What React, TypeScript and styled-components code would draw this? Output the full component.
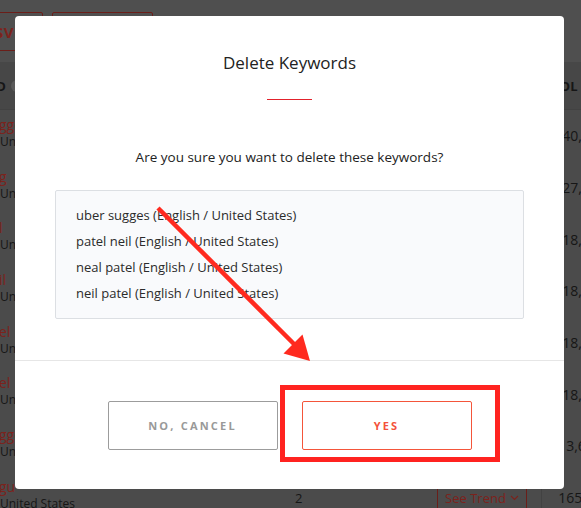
import styled, { createGlobalStyle } from 'styled-components'

const GlobalStyle = createGlobalStyle`
  html, body {
    margin: 0;
    padding: 0;
    background: #4b4b4b;
    font-family: 'Open Sans', 'Liberation Sans', sans-serif;
    overflow: hidden;
  }
`

const rows = [
  { kw: 'gge', vol: '40,500' },
  { kw: 'g', vol: '27,100' },
  { kw: 'l', vol: '18,100' },
  { kw: 'il', vol: '18,100' },
  { kw: 'el', vol: '18,100' },
  { kw: 'el', vol: '18,100' },
  { kw: 'gge', vol: '3,600' },
  { kw: 'gu', vol: '165,000' },
]

const keywords = [
  'uber sugges (English / United States)',
  'patel neil (English / United States)',
  'neal patel (English / United States)',
  'neil patel (English / United States)',
]

export default function App() {
  return (
    <>
      <GlobalStyle />
      <Page>
        <TopBar>
          <ActionButton $width={120} $first>EXPORT TO CSV</ActionButton>
          <ActionButton $width={101}>ADD</ActionButton>
        </TopBar>
        <TableHead>
          <HeadLabel>KEYWORD</HeadLabel>
          <InfoDot />
          <HeadVol>VOL</HeadVol>
        </TableHead>
        {rows.map((r, i) => (
          <Row key={i}>
            <KeywordCell>
              <KeywordName>{r.kw}</KeywordName>
              <Location>United States</Location>
            </KeywordCell>
            <CountCell>2</CountCell>
            <TrendCell>
              <TrendButton>
                See Trend
                <svg width="9" height="6" viewBox="0 0 9 6">
                  <path d="M1 1l3.5 3.5L8 1" fill="none" stroke="currentColor" strokeWidth="1.1" />
                </svg>
              </TrendButton>
            </TrendCell>
            <VolCell>{r.vol}</VolCell>
          </Row>
        ))}

        <Overlay>
          <Modal>
            <Body>
              <Title>Delete Keywords</Title>
              <Divider />
              <Question>Are you sure you want to delete these keywords?</Question>
              <KeywordList>
                {keywords.map((k) => (
                  <KeywordItem key={k}>{k}</KeywordItem>
                ))}
              </KeywordList>
            </Body>
            <Footer>
              <DialogButton $tone="muted">NO, CANCEL</DialogButton>
              <DialogButton $tone="danger">YES</DialogButton>
            </Footer>
          </Modal>
        </Overlay>

        <Highlight />
        <Arrow width="581" height="508" viewBox="0 0 581 508">
          <line x1="158" y1="208" x2="295" y2="345" stroke="#ff2a1f" strokeWidth="4.5" />
          <polygon points="310,361 283.5,353.5 302.5,334.5" fill="#ff2a1f" />
        </Arrow>
      </Page>
    </>
  )
}

const Page = styled.div`
  position: relative;
  width: 581px;
  height: 508px;
  overflow: hidden;
  background: #4b4b4b;
`

const TopBar = styled.div`
  display: flex;
  gap: 9px;
  height: 62px;
  padding-top: 12px;
  box-sizing: border-box;
  margin-left: -77px;
  background: #4f4f4f;
`

const ActionButton = styled.div<{ $width: number; $first?: boolean }>`
  flex-shrink: 0;
  width: ${(p) => p.$width}px;
  height: 39px;
  box-sizing: border-box;
  border: 1px solid #6b1e19;
  border-radius: 2px;
  display: flex;
  align-items: center;
  justify-content: ${(p) => (p.$first ? 'flex-end' : 'center')};
  padding-right: ${(p) => (p.$first ? '28px' : '0')};
  color: #7d221c;
  font-weight: 700;
  font-size: 15px;
  letter-spacing: 0.5px;
  white-space: nowrap;
`

const TableHead = styled.div`
  height: 48px;
  display: flex;
  align-items: center;
  background: #474747;
  border-bottom: 1px solid #424242;
  box-sizing: border-box;
`

const HeadLabel = styled.span`
  flex-shrink: 0;
  width: 70px;
  margin-left: -64px;
  text-align: right;
  font-weight: 700;
  font-size: 13px;
  color: #161616;
`

const InfoDot = styled.span`
  flex-shrink: 0;
  width: 12px;
  height: 12px;
  margin-left: 5px;
  border-radius: 50%;
  background: #5a5a5a;
`

const HeadVol = styled.span`
  margin-left: auto;
  padding-right: 3px;
  font-weight: 700;
  font-size: 13px;
  color: #161616;
  letter-spacing: 0.3px;
`

const Row = styled.div`
  height: 51.7px;
  display: flex;
  align-items: center;
`

const KeywordCell = styled.div`
  flex-shrink: 0;
  width: 280px;
  display: flex;
  flex-direction: column;
  padding-bottom: 6px;
  box-sizing: border-box;
`

const KeywordName = styled.span`
  font-size: 14px;
  line-height: 17px;
  color: #7d221c;
  margin-left: -1px;
`

const Location = styled.span`
  font-size: 12px;
  line-height: 17px;
  color: #161616;
  white-space: nowrap;
`

const CountCell = styled.div`
  flex-shrink: 0;
  width: 100px;
  padding-left: 15px;
  box-sizing: border-box;
  font-size: 13px;
  color: #161616;
`

const TrendCell = styled.div`
  flex-shrink: 0;
  width: 162px;
  height: 100%;
  display: flex;
  align-items: center;
  padding-left: 57px;
  box-sizing: border-box;
  border-right: 1px solid #424242;
`

const TrendButton = styled.div`
  width: 90px;
  height: 28px;
  box-sizing: border-box;
  border: 1px solid #6b1e19;
  border-radius: 2px;
  display: flex;
  align-items: center;
  justify-content: center;
  gap: 4px;
  color: #7d221c;
  font-size: 13px;
`

const VolCell = styled.div`
  flex-shrink: 0;
  width: 84px;
  text-align: center;
  font-size: 14px;
  color: #161616;
`

const Overlay = styled.div`
  position: absolute;
  inset: 0;
  display: flex;
  align-items: flex-start;
  padding: 16px 0 0 15px;
`

const Modal = styled.div`
  width: 549px;
  background: #fff;
  border-radius: 4px;
  overflow: hidden;
`

const Body = styled.div`
  padding: 35px 40px 41px;
  text-align: center;
`

const Title = styled.div`
  font-size: 17px;
  line-height: 24px;
  color: #222;
`

const Divider = styled.div`
  width: 45px;
  height: 1px;
  background: #e2222c;
  margin: 24px auto 0;
`

const Question = styled.div`
  margin-top: 47px;
  font-size: 13.5px;
  line-height: 20px;
  color: #222;
`

const KeywordList = styled.div`
  margin-top: 23px;
  padding: 11px 20px 12px;
  border: 1px solid #dcdfe3;
  border-radius: 2px;
  background: #f9fafc;
  text-align: left;
`

const KeywordItem = styled.div`
  font-size: 13px;
  line-height: 26px;
  color: #2b2b2b;
`

const Footer = styled.div`
  border-top: 1px solid #e6e6e6;
  padding: 40px 0 39px;
  display: flex;
  justify-content: center;
  gap: 24px;
`

const DialogButton = styled.button<{ $tone: 'muted' | 'danger' }>`
  width: 170px;
  height: 49px;
  background: #fff;
  border: 1px solid ${(p) => (p.$tone === 'danger' ? '#f4553a' : '#9c9c9c')};
  border-radius: 2px;
  color: ${(p) => (p.$tone === 'danger' ? '#f4523b' : '#999')};
  font-family: 'Open Sans', 'Liberation Sans', sans-serif;
  font-weight: 700;
  font-size: 11px;
  letter-spacing: 2.2px;
  cursor: pointer;
`

const Highlight = styled.div`
  position: absolute;
  left: 280px;
  top: 385px;
  width: 220px;
  height: 77px;
  box-sizing: border-box;
  border: 5px solid #ff2320;
  pointer-events: none;
`

const Arrow = styled.svg`
  position: absolute;
  left: 0;
  top: 0;
  pointer-events: none;
`
